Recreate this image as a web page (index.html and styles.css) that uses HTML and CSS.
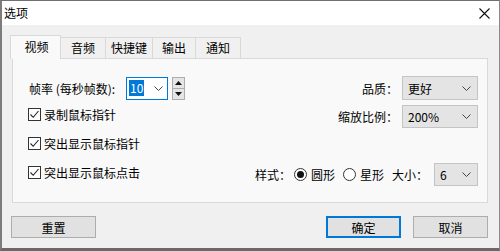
FILE: index.html
```html
<!DOCTYPE html>
<html lang="zh-CN">
<head>
<meta charset="utf-8">
<title>选项</title>
<link rel="stylesheet" href="styles.css">
</head>
<body>
<div class="window">
  <div class="titlebar">
    <span class="title">选项</span>
    <span class="close">
      <svg width="11" height="11" viewBox="0 0 11 11"><path d="M0.5 0.5 L10.5 10.5 M10.5 0.5 L0.5 10.5" stroke="#111" stroke-width="1.1" fill="none"/></svg>
    </span>
  </div>
  <div class="body">
    <div class="tabs">
      <div class="tab selected w50">视频</div>
      <div class="tab w45">音频</div>
      <div class="tab w47">快捷键</div>
      <div class="tab w43">输出</div>
      <div class="tab w45">通知</div>
    </div>
    <div class="panel">
      <div class="col-left">
        <div class="fps-row">
          <span class="label">帧率 (每秒帧数):</span>
          <div class="edit-combo">
            <span class="sel-text">10</span>
            <svg class="chev" width="9" height="5" viewBox="0 0 9 5"><path d="M0.5 0.5 L4.5 4.5 L8.5 0.5" stroke="#444" stroke-width="1" fill="none"/></svg>
          </div>
          <div class="spinner">
            <div class="spin-btn"><svg width="7" height="4" viewBox="0 0 7 4"><path d="M0 4 L3.5 0 L7 4 Z" fill="#111"/></svg></div>
            <div class="spin-btn"><svg width="7" height="4" viewBox="0 0 7 4"><path d="M0 0 L3.5 4 L7 0 Z" fill="#111"/></svg></div>
          </div>
        </div>
        <div class="check-row first">
          <span class="checkbox"><svg width="11" height="11" viewBox="0 0 11 11"><path d="M1.5 5.5 L4.2 8.3 L9.5 2" stroke="#222" stroke-width="1.1" fill="none"/></svg></span>
          <span>录制鼠标指针</span>
        </div>
        <div class="check-row">
          <span class="checkbox"><svg width="11" height="11" viewBox="0 0 11 11"><path d="M1.5 5.5 L4.2 8.3 L9.5 2" stroke="#222" stroke-width="1.1" fill="none"/></svg></span>
          <span>突出显示鼠标指针</span>
        </div>
        <div class="check-row">
          <span class="checkbox"><svg width="11" height="11" viewBox="0 0 11 11"><path d="M1.5 5.5 L4.2 8.3 L9.5 2" stroke="#222" stroke-width="1.1" fill="none"/></svg></span>
          <span>突出显示鼠标点击</span>
        </div>
      </div>
      <div class="col-right">
        <div class="r-row">
          <span class="label">品质：</span>
          <div class="combo wide tall"><span>更好</span><svg class="chev" width="9" height="5" viewBox="0 0 9 5"><path d="M0.5 0.5 L4.5 4.5 L8.5 0.5" stroke="#444" stroke-width="1" fill="none"/></svg></div>
        </div>
        <div class="r-row second">
          <span class="label">缩放比例：</span>
          <div class="combo wide"><span>200%</span><svg class="chev" width="9" height="5" viewBox="0 0 9 5"><path d="M0.5 0.5 L4.5 4.5 L8.5 0.5" stroke="#444" stroke-width="1" fill="none"/></svg></div>
        </div>
        <div class="r-row style-row">
          <span class="label">样式：</span>
          <span class="radio on"><span class="dot"></span></span>
          <span class="radio-text">圆形</span>
          <span class="radio"></span>
          <span class="radio-text">星形</span>
          <span class="label size-label">大小：</span>
          <div class="combo narrow"><span>6</span><svg class="chev" width="9" height="5" viewBox="0 0 9 5"><path d="M0.5 0.5 L4.5 4.5 L8.5 0.5" stroke="#444" stroke-width="1" fill="none"/></svg></div>
        </div>
      </div>
    </div>
    <div class="buttons">
      <div class="btn reset">重置</div>
      <div class="spacer"></div>
      <div class="btn default">确定</div>
      <div class="btn">取消</div>
    </div>
  </div>
</div>
</body>
</html>
```

FILE: styles.css
```css
* { box-sizing: border-box; }
html, body { margin: 0; padding: 0; }
body {
  width: 500px;
  height: 251px;
  overflow: hidden;
  font-family: "Noto Sans CJK SC", "Microsoft YaHei", sans-serif;
  font-size: 12px;
  color: #000;
  background: #f0f0f0;
}
.window {
  width: 500px;
  height: 251px;
  border-top: 1px solid #707070;
  border-left: 2px solid #7c7c7c;
  border-right: 1px solid #8a8a8a;
  border-bottom: 3px solid #6a6a6a;
  display: flex;
  flex-direction: column;
  background: #f0f0f0;
}
.titlebar {
  height: 24px;
  flex: none;
  background: #ffffff;
  display: flex;
  align-items: center;
  justify-content: space-between;
  padding: 0 9px 0 2px;
}
.title { line-height: 24px; }
.close { display: flex; align-items: center; }
.body {
  flex: 1;
  display: flex;
  flex-direction: column;
  padding: 10px 11px 0 10px;
}
.tabs {
  display: flex;
  align-items: flex-end;
  height: 23px;
  position: relative;
  z-index: 1;
}
.tab {
  height: 21px;
  border: 1px solid #d9d9d9;
  border-bottom: none;
  background: #f0f0f0;
  display: flex;
  align-items: center;
  justify-content: center;
  margin-left: -1px;
  line-height: 1;
}
.tab.selected {
  height: 24px;
  margin-left: -2px;
  margin-bottom: -1px;
  background: #f9f9f9;
  padding-bottom: 2px;
  padding-left: 2px;
}
.w50 { width: 51px; }
.w45 { width: 46px; }
.w47 { width: 48px; }
.w43 { width: 44px; }
.panel {
  height: 145px;
  flex: none;
  border: 1px solid #d9d9d9;
  background: #f9f9f9;
  display: flex;
  justify-content: space-between;
}
.col-left {
  display: flex;
  flex-direction: column;
  padding-top: 17px;
}
.fps-row {
  display: flex;
  align-items: center;
  padding-left: 16px;
  height: 24px;
}
.fps-row .label { width: 97px; }
.edit-combo {
  width: 42px;
  height: 23px;
  border: 1px solid #0078d7;
  background: #fff;
  display: flex;
  align-items: center;
  justify-content: space-between;
  padding: 0 4px 0 2px;
}
.sel-text {
  background: #0078d7;
  color: #fff;
  padding: 0 1px;
  line-height: 16px;
}
.spinner {
  margin-left: 4px;
  width: 13px;
  height: 23px;
  display: flex;
  flex-direction: column;
}
.spin-btn {
  flex: 1;
  border: 1px solid #adadad;
  background: #e5e5e5;
  display: flex;
  align-items: center;
  justify-content: center;
}
.spin-btn + .spin-btn { border-top: none; }
.check-row {
  display: flex;
  align-items: center;
  height: 20px;
  margin-left: 15px;
  margin-top: 9px;
}
.check-row.first { margin-top: 4px; }
.checkbox {
  width: 13px;
  height: 13px;
  border: 1px solid #333;
  background: #fff;
  margin-right: 3px;
  display: flex;
  align-items: center;
  justify-content: center;
}
.col-right {
  display: flex;
  flex-direction: column;
  align-items: flex-end;
  padding-top: 17px;
  padding-right: 9px;
}
.r-row {
  display: flex;
  align-items: center;
}
.r-row .label { margin-right: 4px; }
.r-row.second { margin-top: 5px; }
.style-row { margin-top: 35px; }
.combo {
  height: 23px;
  border: 1px solid #c4c4c4;
  background: #e4e4e4;
  display: flex;
  align-items: center;
  justify-content: space-between;
  padding: 0 6px 0 5px;
}
.combo.tall { height: 24px; }
.combo.wide { width: 76px; }
.combo.narrow { width: 44px; }
.radio {
  width: 13px;
  height: 13px;
  border: 1px solid #333;
  border-radius: 50%;
  background: #fff;
  display: flex;
  align-items: center;
  justify-content: center;
  margin-right: 4px;
}
.radio .dot {
  width: 7px;
  height: 7px;
  border-radius: 50%;
  background: #111;
}
.radio-text { margin-right: 8px; }
.style-row .label { margin-right: 3px; }
.style-row .size-label { margin-left: 0; margin-right: 6px; }
.buttons {
  display: flex;
  margin-top: 13px;
  gap: 12px;
}
.spacer { flex: 1; }
.btn {
  width: 75px;
  height: 22px;
  border: 1px solid #adadad;
  background: #e1e1e1;
  display: flex;
  align-items: center;
  justify-content: center;
}
.btn.reset { width: 85px; margin-left: -1px; }
.btn.default { border: 2px solid #0078d7; }
```
